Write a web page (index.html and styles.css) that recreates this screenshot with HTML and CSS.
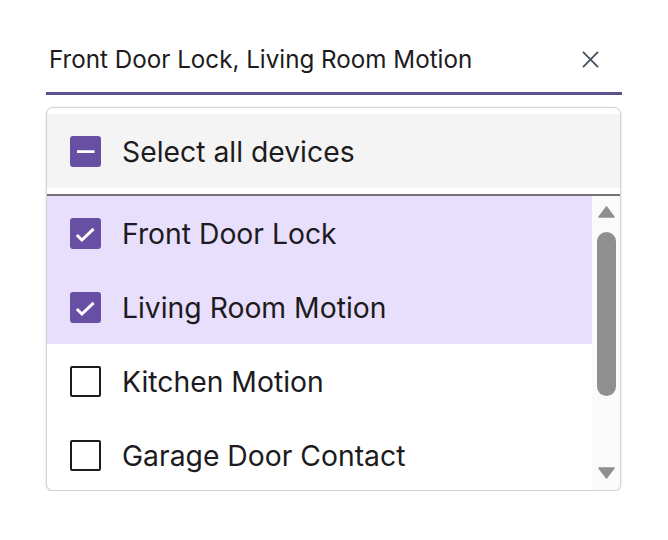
FILE: index.html
```html
<!DOCTYPE html>
<html lang="en">
<head>
<meta charset="utf-8">
<title>Device picker</title>
<link rel="stylesheet" href="styles.css">
</head>
<body>
<div class="picker">
  <div class="field">
    <span class="field-value">Front Door Lock, Living Room Motion</span>
    <button class="clear" aria-label="Clear">
      <svg width="24" height="24" viewBox="0 0 24 24"><path d="M2.5 2.5 L21.5 21.5 M21.5 2.5 L2.5 21.5" stroke="#4a5260" stroke-width="2.3" fill="none"/></svg>
    </button>
  </div>
  <div class="panel">
    <div class="header">
      <span class="box checked">
        <svg width="31" height="31" viewBox="0 0 31 31"><path d="M7 15.7 H24.5" stroke="#fff" stroke-width="2.8" fill="none"/></svg>
      </span>
      <span class="label">Select all devices</span>
    </div>
    <div class="divider"></div>
    <div class="list-wrap">
      <div class="items">
        <div class="row selected">
          <span class="box checked">
            <svg width="31" height="31" viewBox="0 0 31 31"><path d="M6.8 17 L11.9 22 L23.6 10.8" stroke="#fff" stroke-width="3" fill="none"/></svg>
          </span>
          <span class="label">Front Door Lock</span>
        </div>
        <div class="row selected">
          <span class="box checked">
            <svg width="31" height="31" viewBox="0 0 31 31"><path d="M6.8 17 L11.9 22 L23.6 10.8" stroke="#fff" stroke-width="3" fill="none"/></svg>
          </span>
          <span class="label">Living Room Motion</span>
        </div>
        <div class="row">
          <span class="box"></span>
          <span class="label">Kitchen Motion</span>
        </div>
        <div class="row">
          <span class="box"></span>
          <span class="label">Garage Door Contact</span>
        </div>
      </div>
      <div class="scrollbar">
        <svg class="arrow" width="17" height="12" viewBox="0 0 17 12"><path d="M8.5 1 L16 11 H1 Z" fill="#8f8f8f" stroke="#8f8f8f" stroke-width="1.5" stroke-linejoin="round"/></svg>
        <div class="thumb"></div>
        <div class="spacer"></div>
        <svg class="arrow" width="17" height="12" viewBox="0 0 17 12"><path d="M1 1 H16 L8.5 11 Z" fill="#8f8f8f" stroke="#8f8f8f" stroke-width="1.5" stroke-linejoin="round"/></svg>
      </div>
    </div>
  </div>
</div>
</body>
</html>
```
FILE: styles.css
```css
* { box-sizing: border-box; }
html, body { margin: 0; padding: 0; background: #ffffff; }
body {
  font-family: Inter, "Noto Sans", "Liberation Sans", sans-serif;
  color: #1d1b20;
}
.picker {
  width: 576px;
  margin-left: 46px;
  padding-top: 30px;
}
.field {
  display: flex;
  align-items: center;
  height: 65px;
  padding: 0 22px 4px 3px;
  border-bottom: 3px solid #5f518e;
}
.field-value {
  flex: 1;
  font-size: 24.2px;
  line-height: 29px;
  color: #1d1b20;
}
.clear {
  display: flex;
  width: 19px;
  height: 19px;
  padding: 0;
  border: 0;
  background: none;
}
.clear svg { width: 19px; height: 19px; }
.panel {
  margin-top: 12px;
  width: 575px;
  border: 1px solid #d2d2d2;
  border-radius: 7px;
  box-shadow: 0 1px 3px rgba(0,0,0,0.14);
  padding-top: 6px;
  overflow: hidden;
  background: #ffffff;
}
.header {
  display: flex;
  align-items: center;
  gap: 21px;
  height: 74px;
  padding-left: 23px;
  background: #f4f4f4;
}
.divider {
  margin-top: 6px;
  height: 2px;
  background: #77737a;
}
.list-wrap {
  display: flex;
  height: 294px;
}
.items {
  flex: 1;
  overflow: hidden;
}
.row {
  display: flex;
  align-items: center;
  gap: 21px;
  height: 74px;
  padding-left: 23px;
}
.row.selected { background: #e8dffc; }
.label {
  font-size: 28.3px;
  line-height: 34px;
  padding-top: 2px;
  color: #1d1b20;
}
.box {
  flex: none;
  width: 31px;
  height: 31px;
  border: 2.7px solid #1d1b20;
  border-radius: 2px;
  display: flex;
}
.box.checked {
  border: 0;
  border-radius: 3px;
  background: #6750a4;
}
.scrollbar {
  flex: none;
  width: 28px;
  display: flex;
  flex-direction: column;
  align-items: center;
  padding: 10px 0 11px;
  background: #fafafa;
}
.arrow { flex: none; }
.thumb {
  margin-top: 14px;
  width: 19px;
  height: 164px;
  border-radius: 10px;
  background: #8f8f8f;
}
.spacer { flex: 1; }
```
